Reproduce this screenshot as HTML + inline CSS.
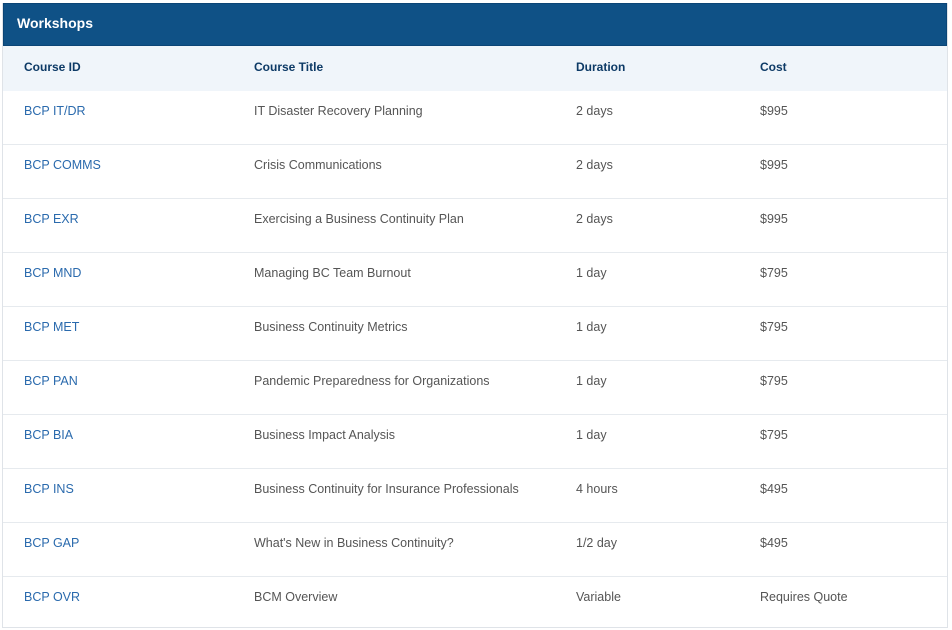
<!DOCTYPE html>
<html><head><style>
body{margin:0;background:#fff;font-family:"Liberation Sans",Arial,sans-serif;}
.box{position:absolute;left:2px;top:3px;width:944px;height:624px;border:1px solid #dfe3e8;border-top:none;box-sizing:content-box;overflow:hidden}
.hd{height:43px;box-sizing:border-box;background:#0f5186;color:#fff;font-weight:bold;font-size:14px;line-height:38px;padding-left:13px;border:1px solid #0b4576}
.row{position:relative;height:53px;border-bottom:1px solid #e6eaee;font-size:12.5px;color:#555}
.row:last-child{border-bottom:none}
.th{height:45px;background:#f0f5fa;color:#0d3a66;font-weight:bold;font-size:12px;border-bottom:none}
.row span{position:absolute;top:13px}
.th span{top:14px}
.c1{left:21px}.c2{left:251px}.c3{left:573px}.c4{left:757px}
.row .c1{color:#2a6aad}.th .c1{color:#0d3a66}
</style></head><body>
<div class="box">
<div class="hd">Workshops</div>
<div class="row th"><span class="c1">Course ID</span><span class="c2">Course Title</span><span class="c3">Duration</span><span class="c4">Cost</span></div>
<div class="row"><span class="c1">BCP IT/DR</span><span class="c2">IT Disaster Recovery Planning</span><span class="c3">2 days</span><span class="c4">$995</span></div>
<div class="row"><span class="c1">BCP COMMS</span><span class="c2">Crisis Communications</span><span class="c3">2 days</span><span class="c4">$995</span></div>
<div class="row"><span class="c1">BCP EXR</span><span class="c2">Exercising a Business Continuity Plan</span><span class="c3">2 days</span><span class="c4">$995</span></div>
<div class="row"><span class="c1">BCP MND</span><span class="c2">Managing BC Team Burnout</span><span class="c3">1 day</span><span class="c4">$795</span></div>
<div class="row"><span class="c1">BCP MET</span><span class="c2">Business Continuity Metrics</span><span class="c3">1 day</span><span class="c4">$795</span></div>
<div class="row"><span class="c1">BCP PAN</span><span class="c2">Pandemic Preparedness for Organizations</span><span class="c3">1 day</span><span class="c4">$795</span></div>
<div class="row"><span class="c1">BCP BIA</span><span class="c2">Business Impact Analysis</span><span class="c3">1 day</span><span class="c4">$795</span></div>
<div class="row"><span class="c1">BCP INS</span><span class="c2">Business Continuity for Insurance Professionals</span><span class="c3">4 hours</span><span class="c4">$495</span></div>
<div class="row"><span class="c1">BCP GAP</span><span class="c2">What's New in Business Continuity?</span><span class="c3">1/2 day</span><span class="c4">$495</span></div>
<div class="row"><span class="c1">BCP OVR</span><span class="c2">BCM Overview</span><span class="c3">Variable</span><span class="c4">Requires Quote</span></div>
</div>
</body></html>
